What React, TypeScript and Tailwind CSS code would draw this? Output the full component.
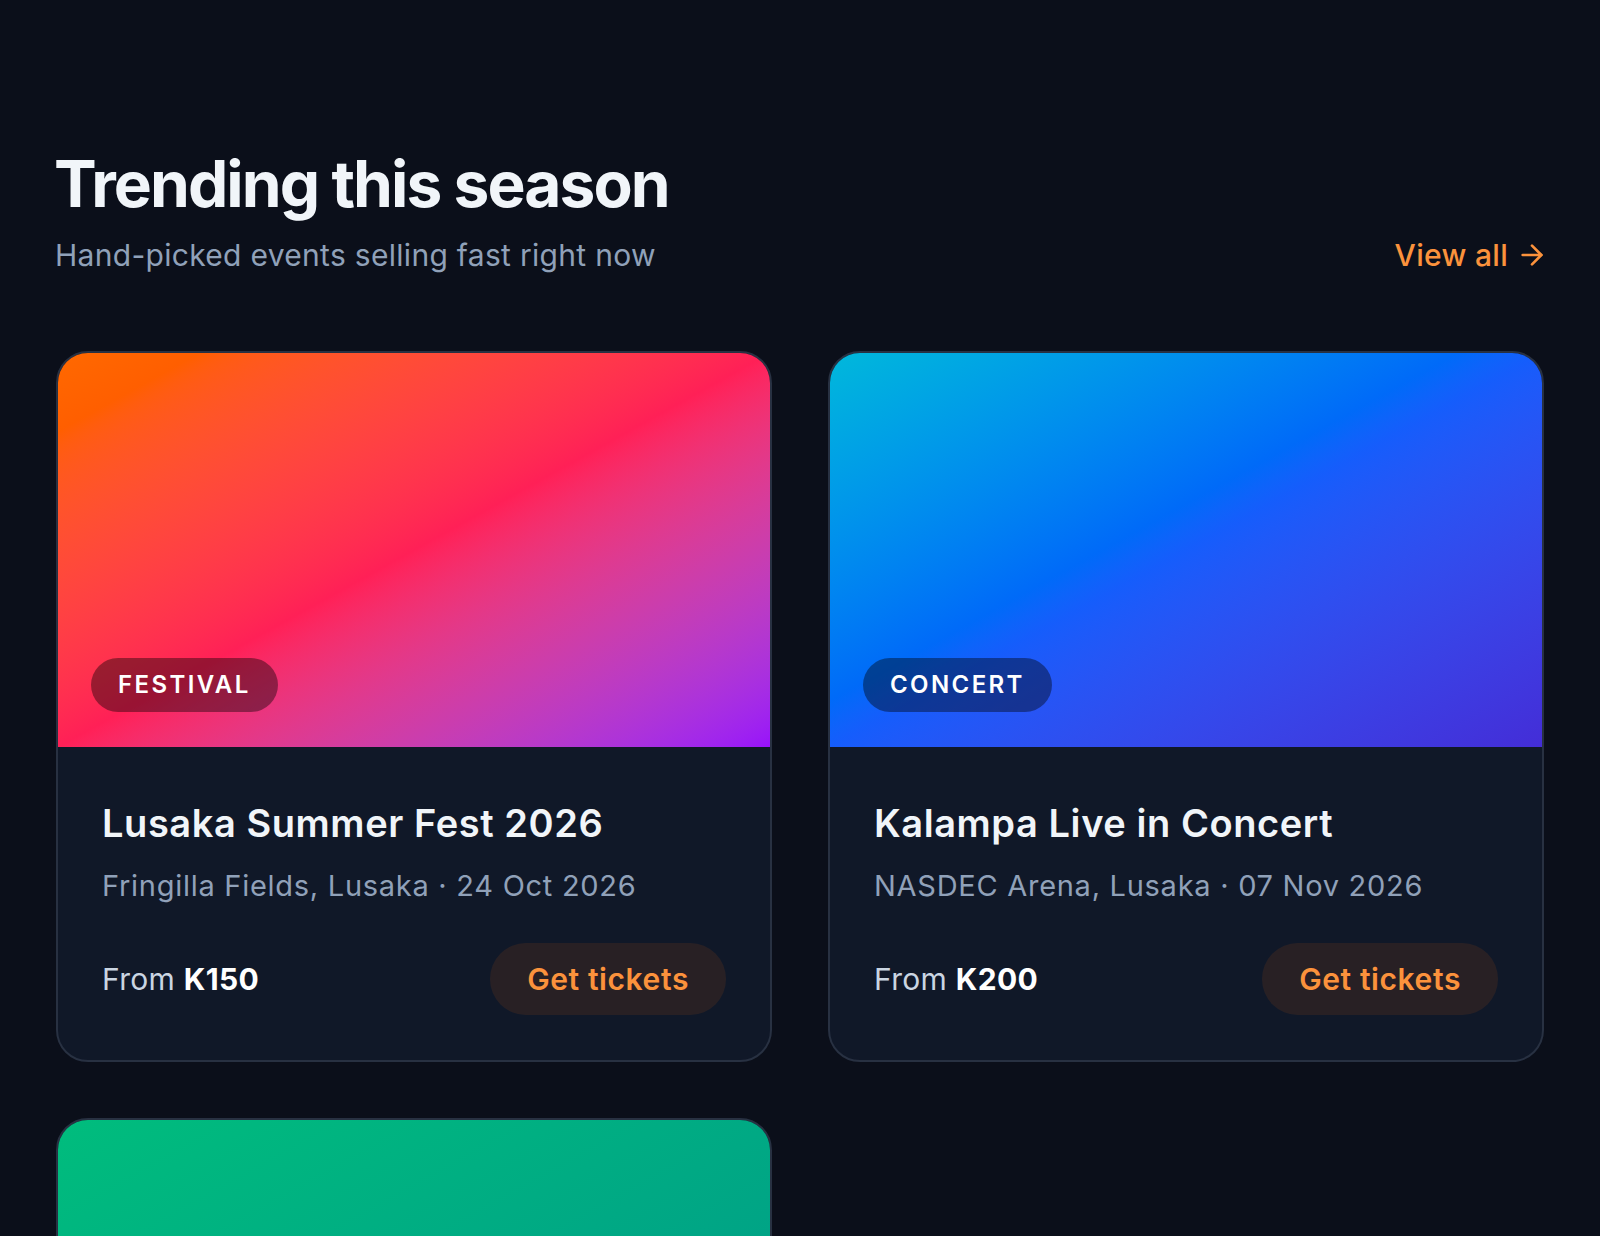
import { ArrowRight } from 'lucide-react';

type EventItem = {
  title: string;
  venue: string;
  date: string;
  price: string;
  category: string;
  gradient: string;
};

const events: EventItem[] = [
  {
    title: 'Lusaka Summer Fest 2026',
    venue: 'Fringilla Fields, Lusaka',
    date: '24 Oct 2026',
    price: 'K150',
    category: 'Festival',
    gradient: 'bg-linear-to-br from-orange-500 via-rose-500 to-purple-600',
  },
  {
    title: 'Kalampa Live in Concert',
    venue: 'NASDEC Arena, Lusaka',
    date: '07 Nov 2026',
    price: 'K200',
    category: 'Concert',
    gradient: 'bg-linear-to-br from-cyan-500 via-blue-600 to-indigo-700',
  },
  {
    title: 'Copperbelt Comedy Night',
    venue: 'Mukuba Hotel, Ndola',
    date: '21 Nov 2026',
    price: 'K120',
    category: 'Comedy',
    gradient: 'bg-linear-to-br from-emerald-500 to-teal-600',
  },
];

function EventCard({ event }: { event: EventItem }) {
  return (
    <div className="rounded-[32px] border-2 border-[#283142] bg-gray-900 overflow-hidden">
      {/* Cover */}
      <div className={`relative h-[394px] ${event.gradient}`}>
        <span className="absolute left-[33px] bottom-[35px] h-[54px] px-[27px] flex items-center rounded-full bg-black/40 text-[24px] font-semibold uppercase tracking-widest text-white">
          {event.category}
        </span>
      </div>

      {/* Body */}
      <div className="px-11 pt-[53px] pb-[45px]">
        <h3 className="text-[38px] leading-[46px] font-semibold tracking-[0.015em] text-slate-100">
          {event.title}
        </h3>
        <p className="mt-[22px] text-[29px] leading-[36px] tracking-[0.025em] text-slate-400">
          {event.venue} · {event.date}
        </p>
        <div className="mt-[39px] flex items-center justify-between">
          <p className="text-[30px] tracking-[0.01em] text-slate-300">
            From <span className="font-bold text-white">{event.price}</span>
          </p>
          <button className="h-[72px] px-[37px] rounded-full bg-orange-500/10 text-[30px] font-semibold tracking-[0.02em] text-[#fb923c]">
            Get tickets
          </button>
        </div>
      </div>
    </div>
  );
}

export default function App() {
  return (
    <div
      className="min-h-screen bg-[#0b0f1a] px-14 pt-[152px] pb-24"
      style={{ fontFamily: 'Inter, "Noto Sans", sans-serif' }}
    >
      {/* Header */}
      <div className="flex items-end justify-between">
        <div>
          <h2 className="-ml-[2px] text-[64px] leading-[64px] font-bold tracking-[-0.03em] text-slate-100">
            Trending this season
          </h2>
          <p className="mt-[19px] -ml-[1px] text-[30px] leading-[40px] tracking-[0.01em] text-slate-400">
            Hand-picked events selling fast right now
          </p>
        </div>
        <a
          href="#"
          className="-mr-[4px] flex items-center gap-2 text-[30px] leading-[40px] font-medium tracking-[0.01em] text-[#fb923c]"
        >
          View all
          <ArrowRight className="h-8 w-8" strokeWidth={2} />
        </a>
      </div>

      {/* Cards */}
      <div className="mt-[76px] grid grid-cols-2 gap-14">
        {events.map((event) => (
          <EventCard key={event.title} event={event} />
        ))}
      </div>
    </div>
  );
}
